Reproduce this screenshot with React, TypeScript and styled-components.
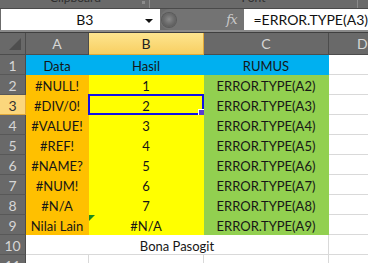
import React from "react";
import styled, { createGlobalStyle } from "styled-components";

const Global = createGlobalStyle`
  html, body { margin: 0; padding: 0; background: #6b6b6b; overflow: hidden; }
  #root { width: 368px; height: 263px; overflow: hidden; }
`;

const FONT = `Lato, "Liberation Sans", sans-serif`;

const Screen = styled.div`
  width: 368px;
  height: 263px;
  display: flex;
  flex-direction: column;
  background: #6b6b6b;
  font-family: ${FONT};
  overflow: hidden;
`;

const RibbonStrip = styled.div`
  height: 8px;
  flex: none;
  display: grid;
  grid-template-columns: 150px 208px 10px;
  background: #6a6a6a;
  border-bottom: 1px solid #4a4a4a;
  overflow: hidden;
`;

const RibbonGroup = styled.div<{ $sep?: boolean }>`
  position: relative;
  display: flex;
  justify-content: center;
  border-right: ${(p) => (p.$sep ? "1px solid #8a8a8a" : "none")};
  overflow: hidden;
`;

const GroupLabel = styled.span<{ $shift: number }>`
  font-size: 12px;
  line-height: 12px;
  color: #2e2e2e;
  margin-top: -8px;
  margin-left: ${(p) => p.$shift}px;
`;

const Launcher = styled.span`
  position: absolute;
  right: 4px;
  top: 1px;
  width: 3px;
  height: 3px;
  background: #8c8c8c;
`;

const FormulaRow = styled.div`
  height: 21px;
  flex: none;
  display: flex;
  background: #6b6b6b;
`;

const NameBox = styled.div`
  width: 159px;
  margin-left: 1px;
  background: #fff;
  display: flex;
  align-items: center;
  position: relative;
  font-size: 14px;
  color: #111;
`;

const NameText = styled.span`
  flex: 1;
  text-align: center;
  padding-left: 24px;
`;

const DropArrow = styled.span`
  width: 0;
  height: 0;
  border-left: 4px solid transparent;
  border-right: 4px solid transparent;
  border-top: 4px solid #111;
  margin-right: 7px;
  margin-top: 2px;
`;

const Splitter = styled.div`
  width: 85px;
  display: flex;
  align-items: center;
  background: #737373;
  border-radius: 10px 0 0 10px;
  position: relative;
`;

const Knob = styled.div`
  width: 14px;
  height: 14px;
  border-radius: 50%;
  margin-left: 2px;
  background: radial-gradient(circle at 50% 45%, #8a8a8a 0%, #6d6d6d 45%, #4e4e4e 100%);
  box-shadow: 0 0 0 1px #5a5a5a;
`;

const Fx = styled.span`
  margin-left: auto;
  margin-right: 8px;
  font-family: "DejaVu Serif", "Liberation Serif", serif;
  font-style: italic;
  font-size: 13px;
  color: #c9c9c9;
  letter-spacing: -1px;
`;

const FormulaBox = styled.div`
  flex: 1;
  background: #fff;
  display: flex;
  align-items: center;
  padding-left: 9px;
  font-size: 14px;
  color: #111;
  white-space: nowrap;
`;

const BarGap = styled.div`
  height: 2px;
  flex: none;
  background: #8a8a8a;
  border-bottom: 1px solid #3f3f3f;
`;

const Sheet = styled.div`
  display: grid;
  grid-template-columns: 26px 63px 115px 125px 1fr;
  grid-auto-rows: 20px;
  grid-template-rows: 22px;
  background: #fff;
`;

const ColHead = styled.div<{ $sel?: boolean; $pad?: number }>`
  display: flex;
  align-items: center;
  justify-content: ${(p) => (p.$pad ? "flex-start" : "center")};
  padding-left: ${(p) => p.$pad ?? 0}px;
  font-size: 14px;
  box-sizing: border-box;
  color: ${(p) => (p.$sel ? "#222" : "#d6d6d6")};
  background: ${(p) =>
    p.$sel ? "linear-gradient(#fde58f, #f8cf62)" : "#696969"};
  border-right: 1px solid ${(p) => (p.$sel ? "#e1a93a" : "#4c4c4c")};
  border-bottom: 1px solid ${(p) => (p.$sel ? "#e1a93a" : "#4c4c4c")};
`;

const Corner = styled.div`
  background: #696969;
  border-right: 1px solid #4c4c4c;
  border-bottom: 1px solid #4c4c4c;
  box-sizing: border-box;
  display: flex;
  align-items: flex-end;
  justify-content: flex-end;
  padding: 0 4px 4px 0;
`;

const CornerTri = styled.div`
  width: 0;
  height: 0;
  border-left: 12px solid transparent;
  border-bottom: 12px solid #4e4e4e;
`;

const RowHead = styled.div<{ $sel?: boolean }>`
  display: flex;
  align-items: center;
  justify-content: center;
  font-size: 14px;
  box-sizing: border-box;
  padding-top: 1px;
  color: ${(p) => (p.$sel ? "#333" : "#d6d6d6")};
  background: ${(p) => (p.$sel ? "#fbd67c" : "#696969")};
  border-right: 1px solid ${(p) => (p.$sel ? "#e1a93a" : "#4c4c4c")};
  border-bottom: 1px solid ${(p) => (p.$sel ? "#e1a93a" : "#585858")};
`;

const Cell = styled.div<{ $bg?: string; $span?: number }>`
  position: relative;
  box-sizing: border-box;
  display: flex;
  align-items: center;
  justify-content: center;
  padding-top: 2px;
  font-size: 13px;
  color: #161616;
  white-space: nowrap;
  grid-column: span ${(p) => p.$span ?? 1};
  background: ${(p) => p.$bg ?? "#fff"};
  border-right: 1px solid ${(p) => p.$bg ?? "#d9d9d9"};
  border-bottom: 1px solid ${(p) => p.$bg ?? "#d9d9d9"};
`;

const ActiveFrame = styled.div`
  position: absolute;
  left: -1px;
  top: -1px;
  right: -1px;
  bottom: -1px;
  border: 2px solid #1010e6;
  pointer-events: none;
`;

const FillHandle = styled.div`
  position: absolute;
  right: -3px;
  bottom: -3px;
  width: 5px;
  height: 5px;
  background: #5b3ccf;
  border: 1px solid #fff;
  box-sizing: content-box;
`;

const ErrorTri = styled.div`
  position: absolute;
  left: 0;
  top: 0;
  width: 0;
  height: 0;
  border-top: 6px solid #1c8a1c;
  border-right: 6px solid transparent;
`;

const BLUE = "#00b0f0";
const ORANGE = "#ffc000";
const YELLOW = "#ffff00";
const GREEN = "#92d050";

const data: [string, string][] = [
  ["#NULL!", "1"],
  ["#DIV/0!", "2"],
  ["#VALUE!", "3"],
  ["#REF!", "4"],
  ["#NAME?", "5"],
  ["#NUM!", "6"],
  ["#N/A", "7"],
  ["Nilai Lain", "#N/A"],
];

export default function App() {
  return (
    <Screen>
      <Global />
      <RibbonStrip>
        <RibbonGroup $sep>
          <GroupLabel $shift={2}>Clipboard</GroupLabel>
          <Launcher />
        </RibbonGroup>
        <RibbonGroup $sep>
          <GroupLabel $shift={0}>Font</GroupLabel>
        </RibbonGroup>
        <RibbonGroup />
      </RibbonStrip>
      <FormulaRow>
        <NameBox>
          <NameText>B3</NameText>
          <DropArrow />
        </NameBox>
        <Splitter>
          <Knob />
          <Fx>fx</Fx>
        </Splitter>
        <FormulaBox>=ERROR.TYPE(A3)</FormulaBox>
      </FormulaRow>
      <BarGap />
      <Sheet>
        <Corner>
          <CornerTri />
        </Corner>
        <ColHead>A</ColHead>
        <ColHead $sel>B</ColHead>
        <ColHead>C</ColHead>
        <ColHead $pad={28}>D</ColHead>

        <RowHead>1</RowHead>
        <Cell $bg={BLUE}>Data</Cell>
        <Cell $bg={BLUE}>Hasil</Cell>
        <Cell $bg={BLUE}>RUMUS</Cell>
        <Cell />

        {data.map(([a, b], i) => {
          const row = i + 2;
          return (
            <React.Fragment key={row}>
              <RowHead $sel={row === 3}>{row}</RowHead>
              <Cell $bg={ORANGE}>{a}</Cell>
              <Cell $bg={YELLOW}>
                {b}
                {row === 3 && (
                  <ActiveFrame>
                    <FillHandle />
                  </ActiveFrame>
                )}
                {row === 9 && <ErrorTri />}
              </Cell>
              <Cell $bg={GREEN}>ERROR.TYPE(A{row})</Cell>
              <Cell />
            </React.Fragment>
          );
        })}

        <RowHead>10</RowHead>
        <Cell $span={3}>Bona Pasogit</Cell>
        <Cell />

        <RowHead>11</RowHead>
        <Cell />
        <Cell />
        <Cell />
        <Cell />
      </Sheet>
    </Screen>
  );
}
